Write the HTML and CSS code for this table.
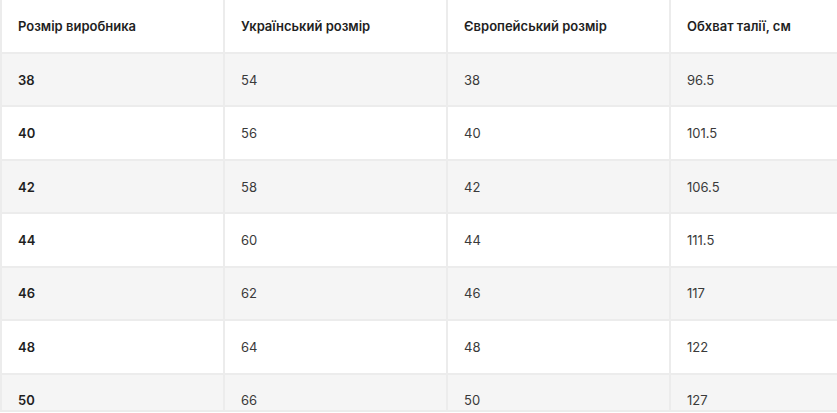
FILE: index.html
```html
<!DOCTYPE html>
<html lang="uk">
<head>
<meta charset="utf-8">
<link rel="stylesheet" href="styles.css">
</head>
<body>
<div class="table-wrap">
<table class="size-table">
  <thead>
    <tr>
      <th>Розмір виробника</th>
      <th>Український розмір</th>
      <th>Європейський розмір</th>
      <th>Обхват талії, см</th>
    </tr>
  </thead>
  <tbody>
    <tr><td class="key">38</td><td>54</td><td>38</td><td>96.5</td></tr>
    <tr><td class="key">40</td><td>56</td><td>40</td><td>101.5</td></tr>
    <tr><td class="key">42</td><td>58</td><td>42</td><td>106.5</td></tr>
    <tr><td class="key">44</td><td>60</td><td>44</td><td>111.5</td></tr>
    <tr><td class="key">46</td><td>62</td><td>46</td><td>117</td></tr>
    <tr><td class="key">48</td><td>64</td><td>48</td><td>122</td></tr>
    <tr><td class="key">50</td><td>66</td><td>50</td><td>127</td></tr>
  </tbody>
</table>
</div>
</body>
</html>
```
FILE: styles.css
```css
html, body {
  margin: 0;
  padding: 0;
  background: #ffffff;
  overflow: hidden;
}

.table-wrap {
  height: 410px;
  overflow: hidden;
  border-bottom: 2px solid #ececec;
}

.size-table {
  border-collapse: collapse;
  table-layout: fixed;
  width: 892px;
  margin-left: 0;
  font-family: Inter, "Noto Sans", sans-serif;
  font-size: 13px;
  color: #333333;
}

.size-table th,
.size-table td {
  width: 223px;
  height: 53.45px;
  padding: 0 0 0 16px;
  text-align: left;
  vertical-align: middle;
  border-left: 2px solid #ececec;
  border-bottom: 2px solid #ececec;
  box-sizing: border-box;
}

.size-table th {
  height: 53px;
  font-weight: 600;
  color: #1f1f1f;
}

.size-table td {
  font-weight: 400;
  color: #3a3a3a;
}

.size-table td.key {
  font-weight: 600;
  color: #1f1f1f;
}

.size-table tbody tr:nth-child(odd) {
  background: #f5f5f5;
}
```
